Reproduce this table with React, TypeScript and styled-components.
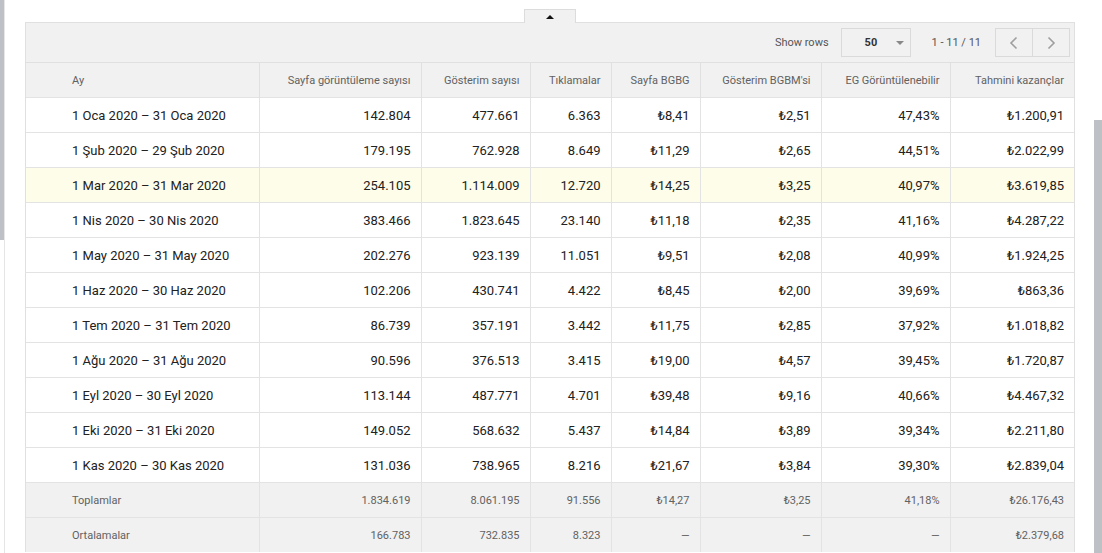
import React from "react";
import styled, { createGlobalStyle } from "styled-components";

const GlobalStyle = createGlobalStyle`
  html, body {
    margin: 0;
    padding: 0;
    background: #ffffff;
    font-family: Roboto, "Liberation Sans", Arial, sans-serif;
    overflow: hidden;
  }
`;

const Page = styled.div`
  display: flex;
  width: 1102px;
  height: 553px;
  overflow: hidden;
`;

const LeftRail = styled.div`
  width: 4px;
  flex-shrink: 0;
  border-right: 1px solid #e6e6e6;
`;

const RailThumb = styled.div`
  height: 240px;
  background: #bdc1c6;
`;

const Content = styled.div`
  flex: 1;
  min-width: 0;
  padding: 9px 19px 0 20px;
  display: flex;
  flex-direction: column;
  align-items: stretch;
`;

const ScrollTrack = styled.div`
  width: 8px;
  flex-shrink: 0;
  padding-top: 120px;
`;

const ScrollThumb = styled.div`
  height: 100%;
  background: #bdc1c6;
`;

const ToggleTab = styled.button`
  align-self: center;
  width: 52px;
  height: 14px;
  margin-bottom: -1px;
  padding: 0;
  border: 1px solid #dcdcdc;
  border-bottom: none;
  background: #f1f1f1;
  display: flex;
  align-items: center;
  justify-content: center;
  position: relative;
  z-index: 1;
`;

const Arrow = styled.span`
  width: 0;
  height: 0;
  border-left: 4px solid transparent;
  border-right: 4px solid transparent;
  border-bottom: 4px solid #111;
`;

const Panel = styled.div`
  border: 1px solid #e0e0e0;
  border-bottom: none;
  background: #f1f1f1;
`;

const Toolbar = styled.div`
  height: 39px;
  display: flex;
  align-items: center;
  justify-content: flex-end;
  padding-right: 4px;
  font-size: 11px;
  color: #555;
`;

const ToolLabel = styled.span`
  margin-right: 12px;
`;

const SelectBox = styled.div`
  width: 70px;
  height: 29px;
  box-sizing: border-box;
  border: 1px solid #dadada;
  display: flex;
  align-items: center;
  justify-content: space-between;
  padding: 0 6px 0 23px;
  font-weight: 700;
  color: #333;
  font-size: 11px;
`;

const Caret = styled.span`
  width: 0;
  height: 0;
  border-left: 4px solid transparent;
  border-right: 4px solid transparent;
  border-top: 4px solid #888;
`;

const RangeText = styled.span`
  margin: 0 14px 0 21px;
  color: #555;
`;

const NavGroup = styled.div`
  display: flex;
  border: 1px solid #dadada;
  height: 29px;
  box-sizing: border-box;
`;

const NavButton = styled.div<{ $divider?: boolean }>`
  width: 36px;
  display: flex;
  align-items: center;
  justify-content: center;
  border-right: ${(p) => (p.$divider ? "1px solid #dadada" : "none")};
  color: #9e9e9e;
`;

const Table = styled.table`
  width: 100%;
  border-collapse: collapse;
  table-layout: fixed;
  background: #fff;
`;

const HeadCell = styled.th<{ $left?: boolean }>`
  height: 34px;
  padding: 0 10px 0 ${(p) => (p.$left ? "46px" : "10px")};
  text-align: ${(p) => (p.$left ? "left" : "right")};
  font-size: 11px;
  font-weight: 400;
  color: #616161;
  background: #f1f1f1;
  border-top: 1px solid #e0e0e0;
  border-left: 1px solid #e0e0e0;
  white-space: nowrap;
  &:first-child {
    border-left: none;
  }
`;

const Row = styled.tr<{ $highlight?: boolean; $summary?: boolean }>`
  background: ${(p) =>
    p.$summary ? "#f1f1f1" : p.$highlight ? "#fdfde9" : "#ffffff"};
  td {
    font-size: ${(p) => (p.$summary ? "11px" : "13px")};
    color: ${(p) => (p.$summary ? "#616161" : "#212121")};
  }
`;

const Cell = styled.td<{ $left?: boolean }>`
  height: 34px;
  padding: 0 10px 0 ${(p) => (p.$left ? "46px" : "10px")};
  text-align: ${(p) => (p.$left ? "left" : "right")};
  border-top: 1px solid #e3e3e3;
  border-left: 1px solid #e3e3e3;
  white-space: nowrap;
  &:first-child {
    border-left: none;
  }
`;

const widths = [233, 162, 109, 81, 89, 121, 129, 124];

const headers = [
  "Ay",
  "Sayfa görüntüleme sayısı",
  "Gösterim sayısı",
  "Tıklamalar",
  "Sayfa BGBG",
  "Gösterim BGBM'si",
  "EG Görüntülenebilir",
  "Tahmini kazançlar",
];

const rows: string[][] = [
  ["1 Oca 2020 – 31 Oca 2020", "142.804", "477.661", "6.363", "₺8,41", "₺2,51", "47,43%", "₺1.200,91"],
  ["1 Şub 2020 – 29 Şub 2020", "179.195", "762.928", "8.649", "₺11,29", "₺2,65", "44,51%", "₺2.022,99"],
  ["1 Mar 2020 – 31 Mar 2020", "254.105", "1.114.009", "12.720", "₺14,25", "₺3,25", "40,97%", "₺3.619,85"],
  ["1 Nis 2020 – 30 Nis 2020", "383.466", "1.823.645", "23.140", "₺11,18", "₺2,35", "41,16%", "₺4.287,22"],
  ["1 May 2020 – 31 May 2020", "202.276", "923.139", "11.051", "₺9,51", "₺2,08", "40,99%", "₺1.924,25"],
  ["1 Haz 2020 – 30 Haz 2020", "102.206", "430.741", "4.422", "₺8,45", "₺2,00", "39,69%", "₺863,36"],
  ["1 Tem 2020 – 31 Tem 2020", "86.739", "357.191", "3.442", "₺11,75", "₺2,85", "37,92%", "₺1.018,82"],
  ["1 Ağu 2020 – 31 Ağu 2020", "90.596", "376.513", "3.415", "₺19,00", "₺4,57", "39,45%", "₺1.720,87"],
  ["1 Eyl 2020 – 30 Eyl 2020", "113.144", "487.771", "4.701", "₺39,48", "₺9,16", "40,66%", "₺4.467,32"],
  ["1 Eki 2020 – 31 Eki 2020", "149.052", "568.632", "5.437", "₺14,84", "₺3,89", "39,34%", "₺2.211,80"],
  ["1 Kas 2020 – 30 Kas 2020", "131.036", "738.965", "8.216", "₺21,67", "₺3,84", "39,30%", "₺2.839,04"],
];

const summary: string[][] = [
  ["Toplamlar", "1.834.619", "8.061.195", "91.556", "₺14,27", "₺3,25", "41,18%", "₺26.176,43"],
  ["Ortalamalar", "166.783", "732.835", "8.323", "—", "—", "—", "₺2.379,68"],
];

const Chevron = ({ dir }: { dir: "left" | "right" }) => (
  <svg width="12" height="14" viewBox="0 0 12 14" fill="none">
    <path
      d={dir === "left" ? "M8.5 1.5 L3 7 L8.5 12.5" : "M3.5 1.5 L9 7 L3.5 12.5"}
      stroke="currentColor"
      strokeWidth="1.6"
    />
  </svg>
);

export default function App() {
  return (
    <>
      <GlobalStyle />
      <Page>
        <LeftRail>
          <RailThumb />
        </LeftRail>
        <Content>
          <ToggleTab aria-label="Collapse">
            <Arrow />
          </ToggleTab>
          <Panel>
            <Toolbar>
              <ToolLabel>Show rows</ToolLabel>
              <SelectBox>
                <span>50</span>
                <Caret />
              </SelectBox>
              <RangeText>1 - 11 / 11</RangeText>
              <NavGroup>
                <NavButton $divider>
                  <Chevron dir="left" />
                </NavButton>
                <NavButton>
                  <Chevron dir="right" />
                </NavButton>
              </NavGroup>
            </Toolbar>
            <Table>
              <colgroup>
                {widths.map((w, i) => (
                  <col key={i} style={{ width: w }} />
                ))}
              </colgroup>
              <thead>
                <tr>
                  {headers.map((h, i) => (
                    <HeadCell key={h} $left={i === 0}>
                      {h}
                    </HeadCell>
                  ))}
                </tr>
              </thead>
              <tbody>
                {rows.map((r, ri) => (
                  <Row key={ri} $highlight={ri === 2}>
                    {r.map((c, ci) => (
                      <Cell key={ci} $left={ci === 0}>
                        {c}
                      </Cell>
                    ))}
                  </Row>
                ))}
                {summary.map((r, ri) => (
                  <Row key={"s" + ri} $summary>
                    {r.map((c, ci) => (
                      <Cell key={ci} $left={ci === 0}>
                        {c}
                      </Cell>
                    ))}
                  </Row>
                ))}
              </tbody>
            </Table>
          </Panel>
        </Content>
        <ScrollTrack>
          <ScrollThumb />
        </ScrollTrack>
      </Page>
    </>
  );
}
